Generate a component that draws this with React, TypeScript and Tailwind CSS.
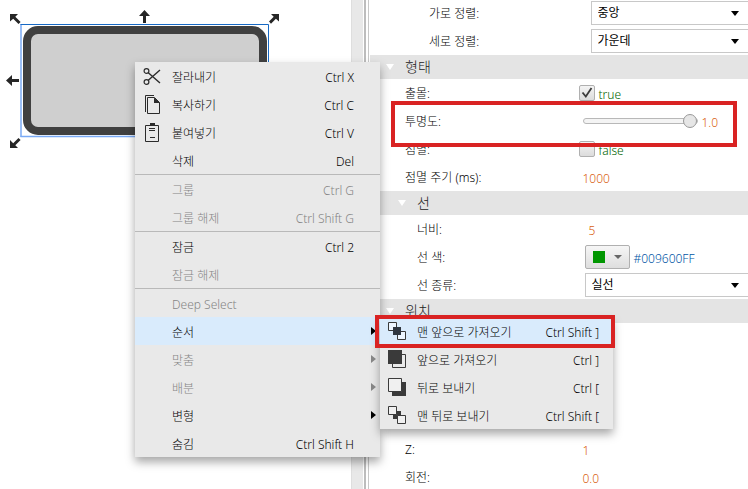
import { ReactNode } from "react"

type IconName = "cut" | "copy" | "paste" | "front" | "forward" | "backward" | "back"

interface MenuEntry {
  label: string
  shortcut?: string
  icon?: IconName
  disabled?: boolean
  active?: boolean
  arrow?: boolean
  children?: MenuEntry[]
}

const orderMenu: MenuEntry[] = [
  { label: "맨 앞으로 가져오기", shortcut: "Ctrl Shift ]", icon: "front", active: true },
  { label: "앞으로 가져오기", shortcut: "Ctrl ]", icon: "forward" },
  { label: "뒤로 보내기", shortcut: "Ctrl [", icon: "backward" },
  { label: "맨 뒤로 보내기", shortcut: "Ctrl Shift [", icon: "back" },
]

const menuGroups: MenuEntry[][] = [
  [
    { label: "잘라내기", shortcut: "Ctrl X", icon: "cut" },
    { label: "복사하기", shortcut: "Ctrl C", icon: "copy" },
    { label: "붙여넣기", shortcut: "Ctrl V", icon: "paste" },
    { label: "삭제", shortcut: "Del" },
  ],
  [
    { label: "그룹", shortcut: "Ctrl G", disabled: true },
    { label: "그룹 해제", shortcut: "Ctrl Shift G", disabled: true },
  ],
  [
    { label: "잠금", shortcut: "Ctrl 2" },
    { label: "잠금 해제", disabled: true },
  ],
  [
    { label: "Deep Select", disabled: true },
    { label: "순서", active: true, arrow: true, children: orderMenu },
    { label: "맞춤", disabled: true, arrow: true },
    { label: "배분", disabled: true, arrow: true },
    { label: "변형", arrow: true },
    { label: "숨김", shortcut: "Ctrl Shift H" },
  ],
]

const icons: Record<IconName, ReactNode> = {
  cut: (
    <g fill="none" stroke="#2b2b2b">
      <circle cx="3.5" cy="5" r="2.4" strokeWidth="1.2" />
      <circle cx="3.5" cy="16" r="2.4" strokeWidth="1.2" />
      <path d="M5.3 6.7 L17 17 M5.3 14.3 L17 4" strokeWidth="1.4" />
    </g>
  ),
  copy: (
    <>
      <path d="M11 1.5 H2.5 V18" fill="none" stroke="#2b2b2b" />
      <path d="M4.5 3.5 H11.5 L16.5 8.5 V19.5 H4.5 Z" fill="none" stroke="#2b2b2b" />
      <path d="M11 3.5 L17 9 H11 Z" fill="#2b2b2b" />
    </>
  ),
  paste: (
    <>
      <path d="M2.5 3.5 H15.5 V19.5 H2.5 Z" fill="none" stroke="#2b2b2b" />
      <path d="M7 1 H12 V4 H7 Z" fill="#2b2b2b" />
      <path d="M6 6.5 H12 M6 8.5 H12 M7 15.5 H12" fill="none" stroke="#2b2b2b" />
    </>
  ),
  front: (
    <>
      <path d="M0.5 1.5 H8.5 V9.5 H0.5 Z M9.5 10.5 H17.5 V18.5 H9.5 Z" fill="#eef6ff" stroke="#3a3a3a" />
      <path d="M5 6 H13 V14 H5 Z" fill="#2f3640" />
    </>
  ),
  forward: (
    <>
      <path d="M4.5 5.5 H17.5 V18.5 H4.5 Z" fill="none" stroke="#3a3a3a" />
      <path d="M0 1 H14 V15 H0 Z" fill="#3a3a3a" />
    </>
  ),
  backward: (
    <>
      <path d="M4 5 H18 V19 H4 Z" fill="#3a3a3a" />
      <path d="M0.5 1.5 H13.5 V14.5 H0.5 Z" fill="#f0f0f0" stroke="#3a3a3a" />
    </>
  ),
  back: (
    <>
      <path d="M5 6 H13 V14 H5 Z" fill="#3a3a3a" />
      <path d="M0.5 1.5 H8.5 V9.5 H0.5 Z M9.5 10.5 H17.5 V18.5 H9.5 Z" fill="#f0f0f0" stroke="#3a3a3a" />
    </>
  ),
}

function Triangle({ className }: { className: string }) {
  return (
    <svg viewBox="0 0 8 4" preserveAspectRatio="none" className={className} fill="currentColor" aria-hidden="true">
      <path d="M0 0 H8 L4 4 Z" />
    </svg>
  )
}

function MenuItem({ entry, sub = false }: { entry: MenuEntry; sub?: boolean }) {
  return (
    <li role="none" className="relative">
      <button
        type="button"
        role="menuitem"
        disabled={entry.disabled}
        className={`flex h-7 w-full items-center gap-[11px] pl-2 text-left ${sub ? "pr-3.5" : "pr-1"} ${
          entry.active ? "bg-[#d9ebfc]" : ""
        } ${entry.disabled ? "text-[#858585]" : "text-black"}`}
      >
        <svg viewBox="0 0 18 20" className="h-5 w-[18px] shrink-0" aria-hidden="true">
          {entry.icon && icons[entry.icon]}
        </svg>
        <span className="flex-1 pt-1 whitespace-nowrap">{entry.label}</span>
        <span className="pt-1 whitespace-nowrap">{entry.shortcut}</span>
        {!sub && (
          <span className="flex w-[11px] justify-end">
            {entry.arrow && (
              <svg viewBox="0 0 5 8" className="h-2 w-[5px]" fill="currentColor" aria-hidden="true">
                <path d="M0 0 L5 4 L0 8 Z" />
              </svg>
            )}
          </span>
        )}
      </button>
      {entry.children && (
        <ul role="menu" className="absolute top-0 left-full w-[233px] bg-[#e9e9e9] shadow-[0_5px_9px_rgba(0,0,0,0.35)]">
          {entry.children.map((child) => (
            <MenuItem key={child.label} entry={child} sub />
          ))}
        </ul>
      )}
      {sub && entry.active && (
        <div className="pointer-events-none absolute -top-0.5 -right-0.5 -bottom-[3px] -left-[5px] border-4 border-[#d92323]" />
      )}
    </li>
  )
}

function ContextMenu() {
  return (
    <div
      role="menu"
      className="absolute top-[62px] left-[135px] w-[245px] bg-[#e9e9e9] shadow-[0_5px_9px_rgba(0,0,0,0.35)]"
    >
      {menuGroups.map((group, i) => (
        <ul key={i} role="none" className={i > 0 ? "border-t border-[#b9b9b9]" : ""}>
          {group.map((entry) => (
            <MenuItem key={entry.label} entry={entry} />
          ))}
        </ul>
      ))}
    </div>
  )
}

function Canvas() {
  return (
    <svg width="290" height="160" viewBox="0 0 290 160" role="img" aria-label="사각형">
      <rect x="27" y="30" width="236" height="101" rx="11" fill="#cfcfcf" stroke="#404040" strokeWidth="8" />
      <path d="M21 137 V24" fill="none" stroke="#7aaaf5" strokeWidth="1.5" />
      <path d="M20.5 136.5 H268.5" fill="none" stroke="#7aaaf5" strokeWidth="1.5" />
      <path d="M20.5 24.5 H268.5 V137" fill="none" stroke="#1769c4" />
      <g fill="#262626">
        <path d="M144.5 10 L150 16 H146 V23 H143 V16 H139 Z" />
        <path d="M6 80.5 L12 75 V79 H19 V82 H12 V86 Z" />
        <path d="M10 14 H18 L15.3 16.7 L20.6 22 L18.5 24.1 L13.2 18.8 L10 21.5 Z" />
        <path d="M279 14 H271 L273.7 16.7 L269 21.6 L271 23.7 L275.9 18.8 L279 21.5 Z" />
        <path d="M10 148 H18 L15.3 145.3 L20.6 140 L18.5 137.9 L13.2 143.2 L10 140 Z" />
      </g>
    </svg>
  )
}

const rowStyles = {
  1: "pl-[35px]",
  2: "pl-[47px]",
  3: "pl-[59px]",
}

interface RowProps {
  label: string
  id?: string
  level?: 1 | 2 | 3
  marked?: boolean
  children: ReactNode
}

function Row({ label, id, level = 1, marked = false, children }: RowProps) {
  return (
    <div className={`relative grid h-7 shrink-0 grid-cols-2 items-center ${rowStyles[level]}`}>
      {id ? (
        <label htmlFor={id} className="pt-0.5">
          {label}
        </label>
      ) : (
        <span className="pt-0.5">{label}</span>
      )}
      <div className="flex items-center pl-0.5">{children}</div>
      {marked && (
        <div className="pointer-events-none absolute -top-1.5 right-[11px] -bottom-3 left-[21px] z-10 border-4 border-[#d92323]" />
      )}
    </div>
  )
}

function SectionHeader({ title, nested = false }: { title: string; nested?: boolean }) {
  return (
    <h2
      className={`flex h-6 shrink-0 items-center gap-[11px] bg-[#e4e4e4] text-sm text-[#222] ${
        nested ? "pl-7" : "pl-4"
      }`}
    >
      <Triangle className="h-1.5 w-2 text-white" />
      {title}
    </h2>
  )
}

function SelectBox({ id, value }: { id: string; value: string }) {
  return (
    <div className="relative w-full">
      <select
        id={id}
        className="block h-6 w-full appearance-none border border-r-0 border-[#c8c8c8] bg-white pl-1.5 font-normal text-black"
      >
        <option>{value}</option>
      </select>
      <Triangle className="pointer-events-none absolute top-2.5 right-[9px] h-[5px] w-2 text-black" />
    </div>
  )
}

function CheckValue({ id, checked }: { id: string; checked: boolean }) {
  return (
    <>
      <span className="relative flex">
        <input
          id={id}
          type="checkbox"
          defaultChecked={checked}
          className="peer size-4 appearance-none rounded-xs border border-[#b0b0b0] bg-linear-to-b from-[#f4f4f4] to-[#dcdcdc]"
        />
        <svg
          viewBox="0 0 16 16"
          className="pointer-events-none absolute inset-0 hidden size-4 peer-checked:block"
          fill="none"
          stroke="#3c3c3c"
          strokeWidth="1.8"
          aria-hidden="true"
        >
          <path d="M3.5 7.5 L6.8 11.5 L12.5 3" />
        </svg>
      </span>
      <span className="pt-1 pl-1 text-[#006400]">{String(checked)}</span>
    </>
  )
}

function NumberValue({ children }: { children: ReactNode }) {
  return <span className="pt-1 pl-1 text-[#d95f10]">{children}</span>
}

function PropertyPanel() {
  return (
    <section className="-mt-px flex flex-col bg-white text-black">
      <Row label="가로 정렬:" id="h-align" level={3}>
        <SelectBox id="h-align" value="중앙" />
      </Row>
      <Row label="세로 정렬:" id="v-align" level={3}>
        <SelectBox id="v-align" value="가운데" />
      </Row>

      <SectionHeader title="형태" />
      <Row label="출몰:" id="visible">
        <CheckValue id="visible" checked />
      </Row>
      <Row label="투명도:" id="opacity" marked>
        <input
          id="opacity"
          type="range"
          min="0"
          max="1"
          step="0.1"
          defaultValue="1"
          className="ml-1 h-4 w-[115px] appearance-none bg-transparent [&::-webkit-slider-runnable-track]:h-1.5 [&::-webkit-slider-runnable-track]:rounded-full [&::-webkit-slider-runnable-track]:border [&::-webkit-slider-runnable-track]:border-[#b8b8b8] [&::-webkit-slider-runnable-track]:bg-[#f4f4f4] [&::-webkit-slider-thumb]:-mt-[5px] [&::-webkit-slider-thumb]:size-3.5 [&::-webkit-slider-thumb]:appearance-none [&::-webkit-slider-thumb]:rounded-full [&::-webkit-slider-thumb]:border [&::-webkit-slider-thumb]:border-[#999] [&::-webkit-slider-thumb]:bg-[#e6e6e6]"
        />
        <NumberValue>1.0</NumberValue>
      </Row>
      <Row label="점멸:" id="blink">
        <CheckValue id="blink" checked={false} />
      </Row>
      <Row label="점멸 주기 (ms):">
        <NumberValue>1000</NumberValue>
      </Row>

      <SectionHeader title="선" nested />
      <Row label="너비:" level={2}>
        <NumberValue>5</NumberValue>
      </Row>
      <Row label="선 색:" id="line-color" level={2}>
        <button
          id="line-color"
          type="button"
          className="flex h-6 w-[45px] items-center justify-between rounded-xs border border-[#b0b0b0] bg-linear-to-b from-[#f6f6f6] to-[#dedede] px-[7px]"
        >
          <span className="size-3 bg-[#009600]" />
          <Triangle className="h-1 w-2 text-[#666]" />
        </button>
        <span className="pt-1 pl-1 text-[#0055a5]">#009600FF</span>
      </Row>
      <Row label="선 종류:" id="line-type" level={2}>
        <SelectBox id="line-type" value="실선" />
      </Row>

      <SectionHeader title="위치" />
      <div className="h-28 shrink-0" />
      <Row label="Z:">
        <NumberValue>1</NumberValue>
      </Row>
      <Row label="회전:">
        <NumberValue>0.0</NumberValue>
      </Row>
    </section>
  )
}

export default function App() {
  return (
    <main className="relative grid h-screen grid-cols-[351fr_19px_378fr] overflow-hidden bg-white font-['Noto_Sans','Noto_Sans_CJK_KR',sans-serif] text-xs font-light">
      <div className="overflow-hidden">
        <Canvas />
      </div>
      {/* scroll gutter and splitter */}
      <div className="flex">
        <div className="w-3 border-l border-[#dedede] bg-[#e8e8e8]" />
        <div className="ml-px w-0.5 bg-[#bdbdbd]" />
        <div className="ml-0.5 w-px bg-[#c8c8c8]" />
      </div>
      <PropertyPanel />
      <ContextMenu />
    </main>
  )
}
